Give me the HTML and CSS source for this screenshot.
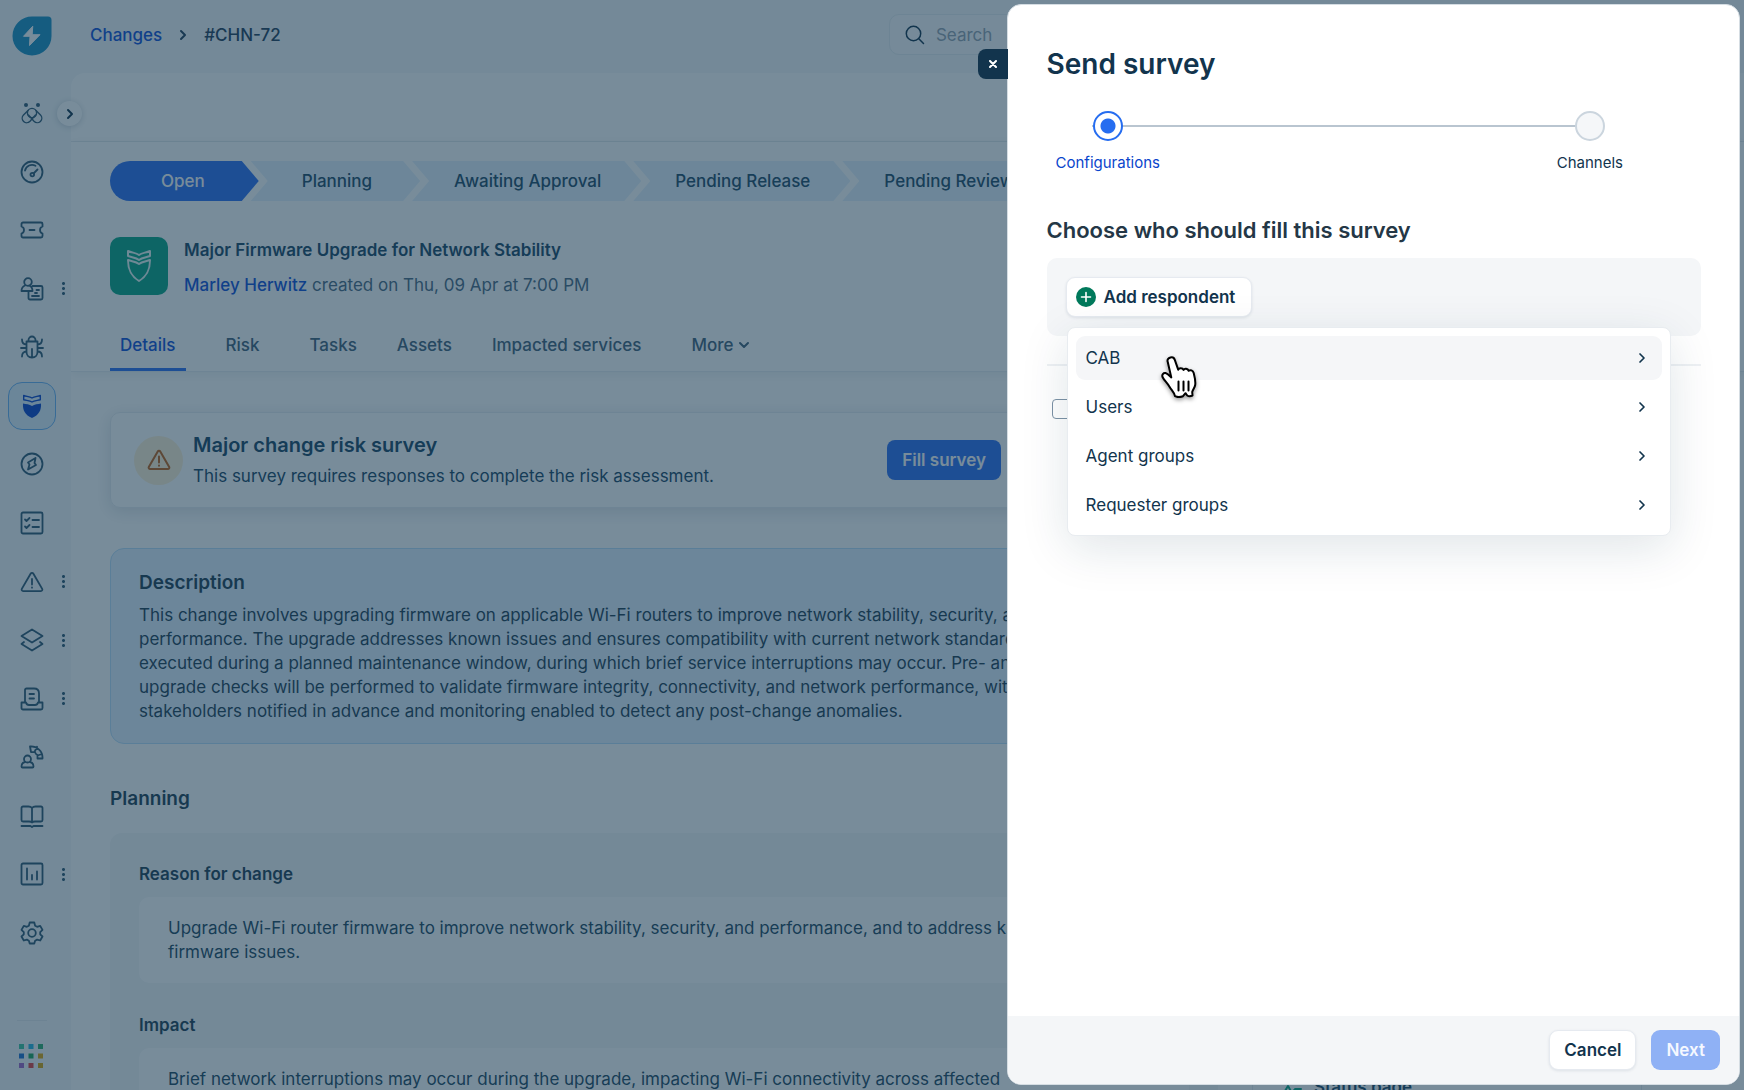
FILE: index.html
```html
<!DOCTYPE html>
<html lang="en">

<head>
    <meta charset="UTF-8">
    <meta name="viewport" content="width=device-width, initial-scale=1.0">
    <title>#CHN-72 - Send survey</title>
    <link rel="stylesheet" href="styles.css">
</head>

<body>
    <!-- Sidebar -->
    <aside class="sidebar">
        <a href="#" class="logo" aria-label="Home">
            <svg width="40" height="40" viewBox="0 0 40 40"><path d="M20 0.500h16a3.500 3.500 0 0 1 3.500 3.500v16a19.500 19.500 0 1 1-19.500-19.500z" fill="#1a8fc4"/><path d="M20.500 10.500 11.500 20.300h6.500L17.500 29.500 28 18.700h-7.500z" fill="#fff" stroke="#fff" stroke-width="1" stroke-linejoin="round"/></svg>
        </a>
        <nav class="nav">
            <a href="#" aria-label="Freddy"><svg viewBox="0 0 24 24"><circle cx="6" cy="4" r="2" class="solid"/><circle cx="18" cy="4" r="2" class="solid"/><g class="thin"><circle cx="12" cy="12" r="4.600"/><path d="M8 9.500 3.500 14a4.500 4.500 0 0 0 6.500 6.300l5.500-6.300M16 9.500l4.500 4.500a4.500 4.500 0 0 1-6.500 6.300L8.500 14"/></g></svg></a>
            <a href="#" aria-label="Dashboard"><svg viewBox="0 0 24 24"><circle cx="12" cy="12" r="10.500"/><path d="M5 10.500a7.200 7.200 0 0 1 10.500-4.700M13.500 13.500l4-4"/><circle cx="12.300" cy="14.600" r="1.800"/></svg></a>
            <a href="#" aria-label="Tickets"><svg viewBox="0 0 24 24"><path d="M3 4.500h18a1.500 1.500 0 0 1 1.500 1.500v2.500a3.700 3.700 0 0 0 0 7V18a1.500 1.500 0 0 1-1.500 1.500H3A1.500 1.500 0 0 1 1.500 18v-2.500a3.700 3.700 0 0 0 0-7V6A1.500 1.500 0 0 1 3 4.500zM9.500 12h5"/></svg></a>
            <a href="#" class="has-more" aria-label="Cases"><svg viewBox="0 0 24 24"><circle cx="8" cy="5" r="3.800"/><path d="M5 8.500C2.500 9.500 1.500 11 1.500 14h11c0-3-.8-4.500-3.300-5.500M12.500 9H21a1.500 1.500 0 0 1 1.500 1.500V21a1.500 1.500 0 0 1-1.500 1.500H10A1.500 1.500 0 0 1 8.500 21v-7M16.500 13H19M15 16h2M12 19h7"/></svg></a>
            <a href="#" aria-label="Problems"><svg viewBox="0 0 24 24"><path d="M8.500 6.500V5a3.500 3.500 0 0 1 7 0v1.500M6.500 6.500h11V17c0 3-2 5.500-5.500 5.500S6.500 20 6.500 17zM12 14v8M6.500 9.500C3.500 9.500 2 8 2 4.500M17.500 9.500c3 0 4.500-1.500 4.500-5M1 13h5.500M17.500 13H23M6.500 16.500c-3 0-4.500 2-4.500 5M17.500 16.500c3 0 4.500 2 4.500 5"/></svg></a>
            <a href="#" class="active" aria-label="Changes"><svg viewBox="0 0 24 24"><path class="solid" d="M3 9.500c3 .8 6.500 .5 9 2.500 2.500-2 6-1.700 9-2.500.5 6.500-2 11.500-9 14.500C5 21 2.500 16 3 9.500z"/><path class="thin" d="M3.700 1.500c3 1 6 1 8.300 2.500 2.300-1.500 5.300-1.500 8.300-2.500v4.300c-3 .8-6 .7-8.300 2.200-2.300-1.500-5.300-1.400-8.300-2.200z"/></svg></a>
            <a href="#" aria-label="Releases"><svg viewBox="0 0 24 24"><circle cx="12" cy="12" r="10.500"/><path d="M15.500 6 8 10.500l1.500 2L8 17.500l8-4.500-1.500-2z"/></svg></a>
            <a href="#" aria-label="Tasks"><svg viewBox="0 0 24 24"><rect x="1.500" y="1.500" width="21" height="21" rx="1.500"/><path d="m5 8.500 1.500 1.500L9.500 7M5 15.500 6.500 17l3-3M12.500 9H19M12.500 16H19"/></svg></a>
            <a href="#" class="has-more" aria-label="Alerts"><svg viewBox="0 0 24 24"><path d="M10.600 3.700a1.600 1.600 0 0 1 2.800 0l8.800 15.200a1.500 1.500 0 0 1-1.300 2.200H3.100a1.500 1.500 0 0 1-1.300-2.200zM12 9v5.500M12 17.400v.3"/></svg></a>
            <a href="#" class="has-more" aria-label="Assets"><svg viewBox="0 0 24 24"><path d="M12 1.500 22.500 8 12 14.500 1.500 8zM4 14l-2.500 2L12 22.500 22.500 16 20 14"/></svg></a>
            <a href="#" class="has-more" aria-label="Purchases"><svg viewBox="0 0 24 24"><path d="M5 15V3a1.500 1.500 0 0 1 1.500-1.500H14c3 0 5 2 5 5V15M9.500 7H14M9.500 11.500H14M1.500 15.500h4.500c.5 2 2 2.500 3 2.500h6c1 0 2.500-.5 3-2.500h4.500V21a1.500 1.500 0 0 1-1.500 1.500H3A1.500 1.500 0 0 1 1.500 21z"/></svg></a>
            <a href="#" aria-label="On call"><svg viewBox="0 0 24 24"><circle cx="7.500" cy="14" r="3.500"/><path d="M5 17c-2.500.5-3.500 2-3.500 4.500 0 .7.300 1 1 1h10c.7 0 1-.3 1-1 0-2.500-1-4-3.500-4.500M10 1.500c7-.5 13 5 12.500 12h-5V10c-1-.5-2-1.500-2.500-2.800l-4-.2zM17 1.800 14.500 7M22 9l-4.500 1.500"/></svg></a>
            <a href="#" aria-label="Solutions"><svg viewBox="0 0 24 24"><path d="M12 4c-1-1.300-2-1.500-3.500-1.500H3A1.500 1.500 0 0 0 1.500 4v12A1.500 1.500 0 0 0 3 17.500h6c1.500 0 2.500.3 3 1 .5-.7 1.500-1 3-1h6a1.500 1.500 0 0 0 1.500-1.500V4A1.500 1.500 0 0 0 21 2.500h-5.500C14 2.500 13 2.700 12 4zM12 4v14M1.500 22h9l1.500 1 1.500-1h9"/></svg></a>
            <a href="#" class="has-more" aria-label="Analytics"><svg viewBox="0 0 24 24"><rect x="1.500" y="1.500" width="21" height="21" rx="1.500"/><path d="M7 6.500v11M12 13v4.500M17 9.500v8"/></svg></a>
            <a href="#" aria-label="Admin"><svg viewBox="0 0 24 24"><circle cx="12" cy="12" r="3.800"/><path d="M9.700 1.500h4.600l.8 3.200 2 1.100 3.100-.9 2.300 4-2.300 2.200v2.200l2.300 2.200-2.300 4-3.100-.9-2 1.100-.8 2.800H9.700l-.8-2.800-2-1.100-3.100.9-2.300-4 2.300-2.200v-2.200L1.500 8.900l2.300-4 3.100.9 2-1.100z"/></svg></a>
        </nav>
        <div class="sidebar-bottom">
            <button class="switcher" aria-label="Switch product">
                <svg width="24" height="24" viewBox="0 0 24 24"><path fill="#3ec6a0" d="M0 0h5v5H0z"/><path fill="#27b5e0" d="M9.500 0h5v5h-5z"/><path fill="#2fae70" d="M19 0h5v5h-5z"/><path fill="#1d6fd0" d="M0 9.500h5v5H0z"/><path fill="#1da65e" d="M9.500 9.500h5v5h-5z"/><path fill="#e0a810" d="M19 9.500h5v5h-5z"/><path fill="#a065c8" d="M0 19h5v5H0z"/><path fill="#e04040" d="M9.500 19h5v5h-5z"/><path fill="#d8a410" d="M19 19h5v5h-5z"/></svg>
            </button>
        </div>
    </aside>
    <button class="expand" aria-label="Expand menu"><svg width="8" height="12" viewBox="0 0 8 12"><path d="m2 2 4 4-4 4"/></svg></button>

    <!-- Main Content -->
    <div class="content">
        <header class="topbar">
            <nav class="breadcrumb">
                <a href="#">Changes</a>
                <svg width="8" height="12" viewBox="0 0 8 12"><path d="m2 2 4 4-4 4"/></svg>
                <span>#CHN-72</span>
            </nav>
            <label class="search">
                <svg width="20" height="20" viewBox="0 0 20 20"><circle cx="8.500" cy="8.500" r="7.200"/><path d="m13.800 13.800 4.700 4.700"/></svg>
                <input type="search" placeholder="Search" aria-label="Search">
            </label>
        </header>

        <main class="panel">
            <div class="toolbar"></div>
            <section class="change">
                <ol class="stages">
                    <li class="stage current">Open</li>
                    <li class="stage second">Planning</li>
                    <li class="stage">Awaiting Approval</li>
                    <li class="stage">Pending Release</li>
                    <li class="stage">Pending Review</li>
                </ol>
                <div class="change-head">
                    <div class="change-icon">
                        <svg width="28" height="34" viewBox="0 0 28 34"><path d="M3 2c4 2 8 1.500 11 4 3-2.500 7-2 11-4v5c-4 1.500-8 1.500-11 4-3-2.500-7-2.500-11-4zM3 11c4 1.500 8 1.500 11 4 3-2.500 7-2.500 11-4 0 10-3 16-11 21C6 27 3 21 3 11z"/></svg>
                    </div>
                    <div class="change-title">
                        <h1>Major Firmware Upgrade for Network Stability</h1>
                        <p class="created"><a href="#">Marley Herwitz</a> created on Thu, 09 Apr at 7:00 PM</p>
                    </div>
                </div>
                <nav class="tabs">
                    <a href="#" class="selected">Details</a>
                    <a href="#" class="spaced">Risk</a>
                    <a href="#" class="spaced">Tasks</a>
                    <a href="#">Assets</a>
                    <a href="#">Impacted services</a>
                    <a href="#" class="spaced">More <svg width="12" height="8" viewBox="0 0 12 8"><path d="m2 2 4 4 4-4"/></svg></a>
                </nav>
            </section>

            <div class="columns">
                <div class="details">
                    <section class="survey">
                        <div class="survey-icon"><svg width="24" height="24" viewBox="0 0 24 24"><path d="M10.600 3.700a1.600 1.600 0 0 1 2.800 0l8.800 15.200a1.500 1.500 0 0 1-1.300 2.200H3.100a1.500 1.500 0 0 1-1.300-2.200zM12 8.500v6M12 17.400v.3"/></svg></div>
                        <div>
                            <h2>Major change risk survey</h2>
                            <p>This survey requires responses to complete the risk assessment.</p>
                        </div>
                        <button class="fill">Fill survey</button>
                    </section>

                    <section class="description">
                        <h2>Description</h2>
                        <p>This change involves upgrading firmware on applicable Wi-Fi routers to improve network stability, security, and<br>
                            performance. The upgrade addresses known issues and ensures compatibility with current network standards,<br>
                            executed during a planned maintenance window, during which brief service interruptions may occur. Pre- and<br>
                            upgrade checks will be performed to validate firmware integrity, connectivity, and network performance, with<br>
                            stakeholders notified in advance and monitoring enabled to detect any post-change anomalies.</p>
                    </section>

                    <h2 class="group-title">Planning</h2>
                    <section class="group">
                        <h3>Reason for change</h3>
                        <p class="field">Upgrade Wi-Fi router firmware to improve network stability, security, and performance, and to address known<br>
                            firmware issues.</p>
                        <h3>Impact</h3>
                        <p class="field">Brief network interruptions may occur during the upgrade, impacting Wi-Fi connectivity across affected</p>
                    </section>
                </div>
                <aside class="related">
                    <a href="#"><svg width="22" height="22" viewBox="0 0 22 22"><path d="M1 5V3a2 2 0 0 1 2-2h16a2 2 0 0 1 2 2v2M1 15h4l3-5 4 7 3-4h6M1 19v1h20v-1"/></svg>Status page</a>
                </aside>
            </div>
        </main>
    </div>

    <div class="overlay"></div>

    <!-- Send survey drawer -->
    <div class="drawer" role="dialog" aria-labelledby="drawer-title">
        <button class="close" aria-label="Close"><svg width="8" height="8" viewBox="0 0 8 8"><path d="m1 1 6 6M7 1 1 7"/></svg></button>
        <div class="drawer-body">
            <h2 id="drawer-title">Send survey</h2>
            <ol class="steps">
                <li class="step done"><span class="bullet"></span>Configurations</li>
                <li class="step"><span class="bullet"></span>Channels</li>
            </ol>
            <h3>Choose who should fill this survey</h3>
            <div class="respondents">
                <button class="btn add"><svg width="20" height="20" viewBox="0 0 20 20"><circle cx="10" cy="10" r="10"/><path d="M10 5.500v9M5.500 10h9"/></svg>Add respondent</button>
                <ul class="menu">
                    <li><button class="hover">CAB<svg width="8" height="12" viewBox="0 0 8 12"><path d="m2 2 4 4-4 4"/></svg></button></li>
                    <li><button>Users<svg width="8" height="12" viewBox="0 0 8 12"><path d="m2 2 4 4-4 4"/></svg></button></li>
                    <li><button>Agent groups<svg width="8" height="12" viewBox="0 0 8 12"><path d="m2 2 4 4-4 4"/></svg></button></li>
                    <li><button>Requester groups<svg width="8" height="12" viewBox="0 0 8 12"><path d="m2 2 4 4-4 4"/></svg></button></li>
                </ul>
                <svg class="pointer" width="40" height="44" viewBox="0 0 40 44"><path d="M11.500 2.500c2-.6 3.600.4 4.300 2.400l3.400 9.800c.6-1.800 4.200-2.400 5.300.2 1-1.700 4.200-1.600 5.200.9 1.500-1.300 4.300-.4 5 2.200 1.200 4.600 2 8.600 1.500 12-.4 2.600-2.400 4.400-3 7l.3 3.500c-1.800.8-4 .8-5.300 0l-1.700-2.300-2.500 3c-2.500 1-6 1-8 0-.3-3.500-3.500-6-5.500-9.500-2-3.600-5.500-6.500-7-9.700-.8-2.300.8-4.300 3-3.900 2.300.5 4 2.600 5.800 4.300L8.700 6.800c-.7-2 .5-3.600 2.800-4.300z"/><path class="lines" d="M19.500 26.500v9M24.500 26.500v9M29.500 26.500v9"/></svg>
            </div>
            <label class="option"><input type="checkbox" aria-label="Reminder"></label>
        </div>
        <footer class="drawer-footer">
            <button class="btn">Cancel</button>
            <button class="btn primary" disabled>Next</button>
        </footer>
    </div>
</body>

</html>
```
FILE: styles.css
```css
* {
    box-sizing: border-box;
}

body {
    font-family: Inter, sans-serif;
    font-size: 17px;
    line-height: 24px;
    color: #22485f;
    background-color: #f5f8fa;
    margin: 0;
    display: flex;
    height: 100vh;
    overflow: hidden;
}

h1, h2, h3, p, ol, ul {
    margin: 0;
    padding: 0;
    font-size: 17px;
    font-weight: 600;
}

p, ol, ul {
    font-weight: 400;
    list-style: none;
}

a {
    color: #1050d8;
    text-decoration: none;
}

button {
    font: inherit;
    border: none;
    padding: 0;
    cursor: pointer;
}

svg {
    fill: none;
    stroke: currentColor;
    stroke-width: 2;
    stroke-linecap: round;
    stroke-linejoin: round;
    flex-shrink: 0;
}

/* Sidebar */
.sidebar {
    width: 71px;
    flex-shrink: 0;
    display: flex;
    flex-direction: column;
    padding-top: 16px;
}

.logo {
    margin-left: 12px;
    height: 40px;
}

.logo svg, .switcher svg {
    stroke: none;
    display: block;
}

.nav {
    flex: 1;
    margin-top: 28px;
    margin-left: 8px;
    display: flex;
    flex-direction: column;
    justify-content: space-around;
}

.nav a {
    position: relative;
    width: 48px;
    height: 48px;
    display: flex;
    align-items: center;
    justify-content: center;
    color: #2f5873;
    border-radius: 14px;
}

.nav svg {
    width: 24px;
    height: 24px;
    stroke-width: 1.8;
}

.nav .thin {
    stroke-width: 1.4;
}

.nav .solid {
    fill: currentColor;
    stroke: none;
}

.nav .active {
    background-color: #e0f0fd;
    border: 1px solid #6cb2f5;
    color: #0a45cc;
}

.has-more::after {
    content: "";
    position: absolute;
    right: -9px;
    width: 3px;
    height: 15px;
    background: radial-gradient(circle, #2f5873 1px, transparent 2px) 0 0 / 3px 5px;
}

.sidebar-bottom {
    height: 70px;
    width: 30px;
    margin-top: 58px;
    margin-left: 17px;
    padding-top: 23px;
    border-top: 1px solid #e5eaee;
}

.switcher {
    background: none;
    margin-left: 2px;
}

.expand {
    position: absolute;
    left: 57px;
    top: 101px;
    width: 25px;
    height: 25px;
    border-radius: 50%;
    background-color: #fff;
    box-shadow: 0 1px 6px rgba(18, 52, 77, 0.2);
    color: #12344d;
    display: flex;
    align-items: center;
    justify-content: center;
}

/* Main Content */
.content {
    flex: 1;
    min-width: 0;
    display: flex;
    flex-direction: column;
}

.topbar {
    height: 73px;
    flex-shrink: 0;
    display: flex;
    align-items: center;
    justify-content: space-between;
    padding: 0 18px 4px 19px;
}

.breadcrumb {
    display: flex;
    align-items: center;
    gap: 17px;
    font-weight: 500;
    color: #24405a;
}

.search {
    width: 48vw;
    height: 41px;
    display: flex;
    align-items: center;
    gap: 9px;
    padding: 0 15px;
    border: 1px solid #e6ecf0;
    border-radius: 10px;
    background-color: #fafbfc;
    color: #12344d;
}

.search svg {
    stroke-width: 1.5;
}

.search input {
    flex: 1;
    border: none;
    background: none;
    font: inherit;
    outline: none;
}

.search input::placeholder {
    color: #92a2b1;
}

.panel {
    flex: 1;
    min-height: 0;
    overflow: hidden;
    background-color: #fff;
    border-top-left-radius: 14px;
}

.toolbar {
    height: 69px;
    border-bottom: 1px solid #e8ecf0;
}

.change {
    padding: 19px 39px 0;
    border-bottom: 1px solid #e8ecf0;
    box-shadow: 0 2px 10px rgba(18, 52, 77, 0.08);
}

.stages {
    display: flex;
}

.stage {
    height: 40px;
    display: flex;
    align-items: center;
    padding: 0 40px 0 42px;
    margin-left: -8px;
    background-color: #e5f2fd;
    color: #1f4a66;
    font-weight: 500;
    white-space: nowrap;
    clip-path: polygon(0 0, calc(100% - 17px) 0, 100% 50%, calc(100% - 17px) 100%, 0 100%, 17px 50%);
}

.stage.second {
    padding: 0 48px 0 51px;
}

.stage.current {
    margin-left: 0;
    padding: 0 54px 0 51px;
    background-color: #2d70f0;
    color: #fff;
    border-radius: 20px 0 0 20px;
    clip-path: polygon(0 0, calc(100% - 17px) 0, 100% 50%, calc(100% - 17px) 100%, 0 100%);
}

.change-head {
    display: flex;
    gap: 16px;
    margin-top: 36px;
}

.change-icon {
    width: 58px;
    height: 58px;
    border-radius: 10px;
    background-color: #08a585;
    color: #e8f7f3;
    display: flex;
    align-items: center;
    justify-content: center;
}

.change-title {
    display: flex;
    flex-direction: column;
    gap: 11px;
    padding-top: 1px;
    color: #1b4765;
}

.created {
    color: #4b6a82;
}

.created a {
    font-weight: 500;
}

.tabs {
    display: flex;
    gap: 20px;
    margin-top: 25px;
}

.tabs a {
    display: flex;
    align-items: center;
    gap: 5px;
    height: 49px;
    padding: 0 10px;
    border-bottom: 3px solid transparent;
    color: #42617a;
    font-weight: 500;
}

.tabs a.spaced {
    margin-left: 10px;
}

.tabs a.selected {
    color: #1050d8;
    border-color: #2d70f0;
}

.columns {
    display: flex;
    gap: 34px;
    padding: 40px 102px 0 39px;
}

.details {
    flex: 1;
    min-width: 0;
    white-space: nowrap;
}

.survey {
    height: 96px;
    display: flex;
    align-items: center;
    gap: 10px;
    padding: 0 216px 0 23px;
    border: 1px solid #e8ecf0;
    border-radius: 10px;
    box-shadow: 0 4px 16px rgba(18, 52, 77, 0.14);
    color: #1b4765;
}

.survey h2 {
    font-size: 20px;
}

.survey p {
    margin-top: 7px;
}

.survey-icon {
    width: 49px;
    height: 49px;
    border-radius: 50%;
    background-color: #fef1d6;
    color: #c0621a;
    display: flex;
    align-items: center;
    justify-content: center;
}

.fill {
    height: 40px;
    margin-left: auto;
    padding: 0 15px;
    border-radius: 8px;
    background-color: #2d70f0;
    color: #fff;
    font-weight: 600;
}

.description {
    margin-top: 40px;
    padding: 22px 28px 20px;
    border: 1px solid #b9defa;
    border-radius: 14px;
    background-color: #e3f1ff;
    color: #1f3f55;
}

.description p {
    margin-top: 8px;
}

.description h2, .group-title {
    font-size: 19px;
}

.group-title {
    margin-top: 43px;
    color: #1f3f55;
}

.group {
    margin-top: 22px;
    padding: 29px;
    border-radius: 12px;
    background-color: #f5f7f9;
}

.group h3 {
    color: #1f3f55;
}

.field {
    margin: 11px 0 30px;
    padding: 19px 29px;
    border-radius: 10px;
    background-color: #fff;
}

.related {
    width: 390px;
    padding: 662px 27px 0;
    border: 1px solid #e8ecf0;
    border-radius: 10px;
}

.related a {
    display: flex;
    align-items: center;
    gap: 12px;
    color: #1b4765;
    font-weight: 600;
}

.related svg {
    color: #08a585;
}

.overlay {
    position: fixed;
    inset: 0;
    background-color: rgba(18, 52, 77, 0.57);
}

/* Drawer */
.drawer {
    position: fixed;
    top: 4px;
    right: 4px;
    bottom: 5px;
    width: calc(42vw + 1px);
    display: flex;
    flex-direction: column;
    border: 1px solid #d5dde3;
    border-radius: 14px;
    background-color: #fff;
    color: #12344d;
}

.close {
    position: absolute;
    right: 100%;
    top: 44px;
    width: 30px;
    height: 30px;
    border-radius: 8px 0 0 8px;
    background-color: #12344d;
    color: #fff;
    display: flex;
    align-items: center;
    justify-content: center;
}

.drawer-body {
    flex: 1;
    padding: 41px 38px 0 39px;
}

.drawer-body h2 {
    font-size: 28px;
    line-height: 36px;
}

.steps {
    display: flex;
    justify-content: space-between;
    margin-top: 29px;
    padding: 0 78px 0 9px;
    background: linear-gradient(#b9c5d0, #b9c5d0) 45px 14px / calc(100% - 168px) 2px no-repeat;
    font-size: 15px;
}

.step {
    display: flex;
    flex-direction: column;
    align-items: center;
    gap: 10px;
}

.bullet {
    width: 30px;
    height: 30px;
    border: 2px solid #cbd5de;
    border-radius: 50%;
    background-color: #f5f7f9;
}

.done {
    color: #0a45cc;
}

.done .bullet {
    border-color: #266df0;
    background: radial-gradient(circle, #266df0 7px, #fff 8px);
}

.drawer-body h3 {
    margin-top: 41px;
    font-size: 22px;
    line-height: 28px;
    color: #243746;
}

.respondents {
    position: relative;
    margin-top: 14px;
    padding: 19px;
    border-radius: 10px;
    background-color: #f4f6f8;
}

.btn {
    height: 40px;
    padding: 0 14px;
    border: 1px solid #e6eaf0;
    border-radius: 9px;
    background-color: #fff;
    box-shadow: 0 1px 3px rgba(18, 52, 77, 0.1);
    color: #12344d;
    font-weight: 600;
}

.add {
    display: flex;
    align-items: center;
    gap: 8px;
    padding: 0 16px 0 9px;
}

.add circle {
    fill: #00795b;
    stroke: none;
}

.add path {
    stroke: #fff;
    stroke-width: 1.6;
}

.menu {
    position: absolute;
    z-index: 1;
    top: 69px;
    left: 20px;
    right: 30px;
    display: flex;
    flex-direction: column;
    gap: 5px;
    padding: 8px;
    border: 1px solid #e8ecf0;
    border-radius: 8px;
    background-color: #fff;
    box-shadow: 0 12px 48px rgba(18, 52, 77, 0.13);
}

.menu button {
    width: 100%;
    height: 44px;
    display: flex;
    align-items: center;
    justify-content: space-between;
    padding: 0 16px 0 10px;
    border-radius: 9px;
    background: none;
    color: #12344d;
}

.menu button svg {
    stroke-width: 1.7;
}

.menu button.hover {
    background-color: #f5f6f8;
}

.pointer {
    position: absolute;
    z-index: 2;
    top: 97px;
    left: 112px;
    fill: #fff;
    stroke: #000;
    filter: drop-shadow(0 2px 2px rgba(0, 0, 0, 0.4));
}

.option {
    display: block;
    margin-top: 28px;
    padding: 33px 5px;
    border-top: 2px solid #eef1f4;
}

.option input {
    appearance: none;
    display: block;
    width: 20px;
    height: 20px;
    margin: 0;
    border: 1px solid #7d93a6;
    border-radius: 4px;
}

.drawer-footer {
    display: flex;
    justify-content: flex-end;
    gap: 15px;
    padding: 14px 19px;
    border-radius: 0 0 13px 13px;
    background-color: #f4f6f8;
}

.primary {
    padding: 0 15px;
    border: none;
    background-color: #8fb1f5;
    box-shadow: none;
    color: #f5f8ff;
}
```
